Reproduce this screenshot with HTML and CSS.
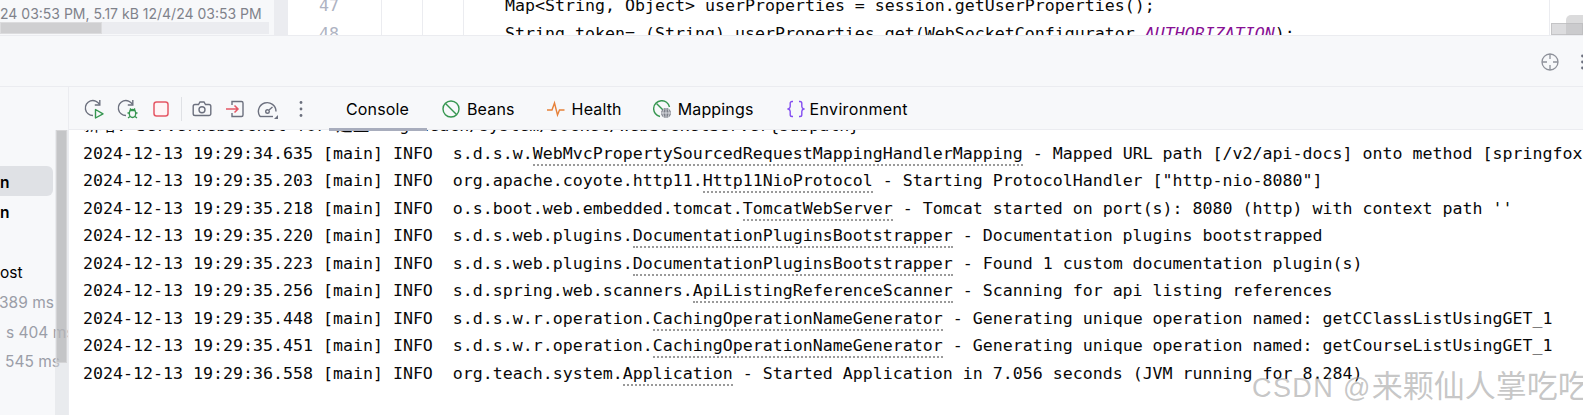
FILE: index.html
```html
<!DOCTYPE html>
<html lang="en">
<head>
<meta charset="utf-8">
<title>Run console</title>
<link rel="stylesheet" href="styles.css">
</head>
<body>
<div class="top">
  <div class="project">
    <div class="project-text">24 03:53 PM, 5.17 kB 12/4/24 03:53 PM</div>
    <div class="hbar"><div class="hthumb"></div></div>
  </div>
  <div class="project-track"></div>
  <div class="gutter">
    <div class="nums"><div class="num">47</div><div class="num">48</div></div>
    <div class="gcol"></div><div class="gcol"></div><div class="gcol"></div>
  </div>
  <div class="code">
    <div class="code-line">Map&lt;String, Object&gt; userProperties = session.getUserProperties();</div>
    <div class="code-line">String token= (String) userProperties.get(WebSocketConfigurator.<i class="const">AUTHORIZATION</i>);</div>
  </div>
  <div class="minimap"><div class="mini-box"></div><div class="mini-over"></div></div>
</div>

<div class="panel">
  <div class="panel-head">
    <svg class="cross" width="20" height="20" viewBox="0 0 20 20" fill="none" stroke="#8e919a" stroke-width="1.3"><circle cx="10" cy="10" r="8"/><path d="M10 2v5M10 13v5M2 10h5M13 10h5"/></svg>
    <svg class="more-cut" width="5" height="20" viewBox="0 0 5 20" fill="#6c707e"><circle cx="2.5" cy="4" r="1.4"/><circle cx="2.5" cy="10" r="1.4"/><circle cx="2.5" cy="16" r="1.4"/></svg>
  </div>
  <div class="panel-body">
    <div class="side">
      <div class="side-list">
        <div class="side-row sel"><span class="strong">n</span></div>
        <div class="side-row"><span class="strong">n</span></div>
        <div class="side-row"></div>
        <div class="side-row"><span>ost</span></div>
        <div class="side-row muted pull"><span>389 ms</span></div>
        <div class="side-row muted in6"><span>s 404 ms</span></div>
        <div class="side-row muted in5"><span>545 ms</span></div>
      </div>
      <div class="vtrack"><div class="vthumb"></div></div>
    </div>
    <div class="main">
      <div class="toolbar">
        <div class="tool"><svg width="22" height="22" viewBox="0 0 22 22" fill="none"><path d="M9 17.5a7.5 7.5 0 1 1 6.5-11" stroke="#6c707e" stroke-width="1.4"/><path d="M15.8 2v5h-5" stroke="#6c707e" stroke-width="1.4"/><path d="M11.5 11.5v8.5l7.5-4.2z" stroke="#369650" stroke-width="1.4" stroke-linejoin="round"/></svg></div>
        <div class="tool"><svg width="22" height="22" viewBox="0 0 22 22" fill="none"><path d="M9 17.5a7.5 7.5 0 1 1 6.5-11" stroke="#6c707e" stroke-width="1.4"/><path d="M15.8 2v5h-5" stroke="#6c707e" stroke-width="1.4"/><ellipse cx="15.5" cy="15.5" rx="3.2" ry="4" stroke="#369650" stroke-width="1.4"/><path d="M13 10.5l1.5 2M18 10.5l-1.5 2M10.5 15h2M18.5 15h2M11 20l2-1.5M20 20l-2-1.5M12.5 12.5h6" stroke="#369650" stroke-width="1.3"/></svg></div>
        <div class="tool"><svg width="22" height="22" viewBox="0 0 22 22"><rect x="4" y="4" width="14" height="14" rx="2.5" fill="#fff4f6" stroke="#e55765" stroke-width="1.5"/></svg></div>
        <div class="tool-sep"></div>
        <div class="tool"><svg width="22" height="22" viewBox="0 0 22 22" fill="none" stroke="#6c707e" stroke-width="1.4"><path d="M4 6.5h3.500l1.500-2.500h4l1.500 2.500H18a1.800 1.800 0 0 1 1.800 1.800v7.400a1.800 1.800 0 0 1-1.800 1.800H4a1.800 1.800 0 0 1-1.800-1.800V8.300A1.800 1.800 0 0 1 4 6.500z"/><circle cx="11" cy="11.700" r="3"/></svg></div>
        <div class="tool"><svg width="22" height="22" viewBox="0 0 22 22" fill="none"><path d="M8 7V3.500h9.500a1.500 1.500 0 0 1 1.500 1.500v12a1.500 1.500 0 0 1-1.500 1.500H8V15" stroke="#6c707e" stroke-width="1.400"/><path d="M2 11h12M10.500 7.500L14 11l-3.500 3.500" stroke="#e55765" stroke-width="1.500"/></svg></div>
        <div class="tool"><svg width="22" height="22" viewBox="0 0 22 22" fill="none"><path d="M3 18.500A8.800 8.800 0 1 1 19 13.500" stroke="#6c707e" stroke-width="1.400"/><path d="M3 18.500h13" stroke="#6c707e" stroke-width="1.400"/><circle cx="10.500" cy="13.500" r="1.800" stroke="#6c707e" stroke-width="1.400"/><path d="M12 12l3.500-3" stroke="#6c707e" stroke-width="1.400"/><path d="M21 17v4h-4z" fill="#6c707e"/></svg></div>
        <div class="tool"><svg width="22" height="22" viewBox="0 0 22 22" fill="#6c707e"><circle cx="11" cy="4.500" r="1.400"/><circle cx="11" cy="11" r="1.400"/><circle cx="11" cy="17.500" r="1.400"/></svg></div>
        <div class="tabs">
          <div class="tab active">Console</div>
          <div class="tab beans"><svg width="18" height="18" viewBox="0 0 18 18" fill="none" stroke="#369650" stroke-width="1.400"><circle cx="9" cy="9" r="8"/><path d="M3.500 3.500l11 11"/></svg>Beans</div>
          <div class="tab health"><svg width="18" height="18" viewBox="0 0 18 18" fill="none" stroke="#e6813a" stroke-width="1.400"><path d="M0 10h5l2.500-7 3 12 2-5h5"/></svg>Health</div>
          <div class="tab mappings"><svg width="18" height="18" viewBox="0 0 18 18" fill="none"><path d="M7 16.500A8 8 0 1 1 16.500 7" stroke="#369650" stroke-width="1.400"/><path d="M3.500 3.500l9 9" stroke="#369650" stroke-width="1.400"/><circle cx="13" cy="13" r="5" fill="#7d808a"/><path d="M8 13h10M13 8v10M11 9c-1.500 2.500-1.500 5.500 0 8M15 9c1.500 2.500 1.500 5.500 0 8" stroke="#f7f8fa" stroke-width=".7"/></svg>Mappings</div>
          <div class="tab env"><svg width="18" height="18" viewBox="0 0 18 18" fill="none" stroke="#834df0" stroke-width="1.400"><path d="M6 1.500H5a1.800 1.800 0 0 0-1.800 1.800v3.200c0 1.200-.7 2-1.800 2.500 1.100.5 1.800 1.300 1.800 2.500v3.200A1.800 1.800 0 0 0 5 16.500h1M12 1.500h1a1.800 1.800 0 0 1 1.800 1.800v3.200c0 1.200.7 2 1.800 2.500-1.100.5-1.800 1.300-1.800 2.500v3.200a1.800 1.800 0 0 1-1.800 1.800h-1"/></svg>Environment</div>
        </div>
      </div>
      <div class="log">
        <div class="line">新增: ServerWebSocket for 建立 org.teach/system/socket/WebSocketServer{subpath}</div>
        <div class="line">2024-12-13 19:29:34.635 [main] INFO  s.d.s.w.<span class="cls">WebMvcPropertySourcedRequestMappingHandlerMapping</span> - Mapped URL path [/v2/api-docs] onto method [springfox.documentation</div>
        <div class="line">2024-12-13 19:29:35.203 [main] INFO  org.apache.coyote.http11.<span class="cls">Http11NioProtocol</span> - Starting ProtocolHandler ["http-nio-8080"]</div>
        <div class="line">2024-12-13 19:29:35.218 [main] INFO  o.s.boot.web.embedded.tomcat.<span class="cls">TomcatWebServer</span> - Tomcat started on port(s): 8080 (http) with context path ''</div>
        <div class="line">2024-12-13 19:29:35.220 [main] INFO  s.d.s.web.plugins.<span class="cls">DocumentationPluginsBootstrapper</span> - Documentation plugins bootstrapped</div>
        <div class="line">2024-12-13 19:29:35.223 [main] INFO  s.d.s.web.plugins.<span class="cls">DocumentationPluginsBootstrapper</span> - Found 1 custom documentation plugin(s)</div>
        <div class="line">2024-12-13 19:29:35.256 [main] INFO  s.d.spring.web.scanners.<span class="cls">ApiListingReferenceScanner</span> - Scanning for api listing references</div>
        <div class="line">2024-12-13 19:29:35.448 [main] INFO  s.d.s.w.r.operation.<span class="cls">CachingOperationNameGenerator</span> - Generating unique operation named: getCClassListUsingGET_1</div>
        <div class="line">2024-12-13 19:29:35.451 [main] INFO  s.d.s.w.r.operation.<span class="cls">CachingOperationNameGenerator</span> - Generating unique operation named: getCourseListUsingGET_1</div>
        <div class="line">2024-12-13 19:29:36.558 [main] INFO  org.teach.system.<span class="cls">Application</span> - Started Application in 7.056 seconds (JVM running for 8.284)</div>
        <div class="watermark">CSDN @<span class="wm-cjk">来颗仙人掌吃吃</span></div>
      </div>
    </div>
  </div>
</div>
</body>
</html>
```
FILE: styles.css
```css
* { box-sizing: border-box; }
html, body { margin: 0; height: 100%; }
body {
  width: 1583px;
  height: 415px;
  overflow: hidden;
  display: flex;
  flex-direction: column;
  background: #fff;
  font-family: Inter, "Noto Sans", sans-serif;
  color: #000;
}

/* editor strip */
.top { height: 35px; display: flex; overflow: hidden; flex: none; }
.project { width: 274px; flex: none; background: #f7f8fa; position: relative; overflow: hidden; }
.project-text { font-size: 14px; color: #7f828b; white-space: nowrap; line-height: 28px; }
.hbar { position: absolute; left: 0; bottom: 1px; width: 269px; height: 12px; background: #ebecf0; }
.hthumb { width: 102px; height: 100%; background: #cfcfd1; border: 1px solid #dcdcde; }
.project-track { width: 14px; flex: none; background: #ebecf0; }
.gutter { width: 174px; flex: none; display: flex; }
.nums { width: 93px; flex: none; padding-left: 31px; margin-top: -8px; }
.num { font: 16.6px/27.5px "DejaVu Sans Mono", monospace; color: #aeb3c2; height: 27.5px; }
.gcol { width: 41px; flex: none; border-left: 1px solid #ebecf0; }
.gcol:last-child { width: 40px; }
.code { width: 1087px; flex: none; padding-left: 43px; margin-top: -8px; }
.code-line { font: 16.6px/27.5px "DejaVu Sans Mono", monospace; letter-spacing: .006px; color: #080808; white-space: pre; height: 27.5px; }
.const { color: #871094; }
.minimap { flex: 1; border-left: 1px solid #ebecf0; position: relative; }
.mini-box { position: absolute; left: 1px; right: 0; top: 23px; height: 12px; background: #dcdcde; border: 1px solid #c4c4c6; }
.mini-over { position: absolute; left: 16px; right: 0; top: 15px; bottom: 0; background: rgba(190,190,192,.55); border-radius: 5px 0 0 0; }

/* tool window */
.panel { flex: 1; min-height: 0; display: flex; flex-direction: column; background: #f7f8fa; border-top: 1px solid #ebecf0; }
.panel-head { height: 51px; flex: none; border-bottom: 1px solid #ebecf0; display: flex; align-items: center; justify-content: flex-end; }
.cross { margin-right: 20px; margin-top: 1px; }
.more-cut { margin-right: -2px; margin-top: 1px; flex: none; }
.panel-body { flex: 1; min-height: 0; display: flex; }

.side { width: 69px; flex: none; position: relative; overflow: hidden; border-right: 1px solid #ebecf0; }
.side-list { padding-top: 79px; font-size: 15.5px; line-height: 33px; white-space: nowrap; color: #000; }
.side-row { height: 30px; }
.side-row.sel { width: 53px; background: #dfe1e5; border-radius: 0 6px 6px 0; }
.strong { font-weight: 600; }
.muted { color: #9b9ea8; }
.pull span { margin-left: -1px; }
.in6 { padding-left: 6px; }
.in5 { padding-left: 5px; line-height: 32px; }
.vtrack { position: absolute; left: 55px; width: 13px; top: 43px; bottom: 0; background: rgba(220,221,226,.5); }
.vthumb { margin: 0 auto; width: 11px; height: 233px; background: rgba(165,165,167,.55); border: 1px solid #d4d4d6; }

.main { flex: 1; min-width: 0; display: flex; flex-direction: column; }
.toolbar { height: 43px; flex: none; display: flex; align-items: center; padding: 2px 0 0 9px; border-bottom: 1px solid #ebecf0; }
.tool { width: 33px; height: 33px; flex: none; display: flex; align-items: center; justify-content: center; }
.tool-sep { width: 1px; height: 24px; background: #dfe1e5; margin: 0 3px 0 4px; flex: none; }
.tabs { display: flex; align-items: stretch; height: 100%; margin-left: 12px; font-size: 16px; color: #000; }
.tab { display: flex; align-items: center; gap: 7px; position: relative; z-index: 1; white-space: nowrap; letter-spacing: .15px; }
.tab.active { width: 98px; padding-left: 17px; }
.tab.active::after { content: ""; position: absolute; left: 0; right: 0; bottom: -2px; height: 3px; background: #a8adbd; }
.tab.beans { margin-left: 15px; }
.tab.health { margin-left: 32px; }
.tab.mappings { margin-left: 31px; }
.tab.env { margin-left: 33px; gap: 5px; letter-spacing: .35px; }

.log { flex: 1; min-height: 0; background: #fff; display: flex; flex-direction: column; justify-content: flex-end; overflow: hidden; padding: 0 0 28px 14px; position: relative; }
.line { font-family: "DejaVu Sans Mono", "Noto Sans CJK SC", monospace; font-size: 16.6px; letter-spacing: .006px; line-height: 27.5px; height: 27.5px; white-space: pre; flex: none; color: #080808; }
.cls { border-bottom: 2px dotted #9a9a9a; padding-bottom: 1px; }
.watermark { position: absolute; left: 1183px; top: 241px; font-family: "Liberation Sans", "Noto Sans CJK SC", sans-serif; font-size: 27px; letter-spacing: 1.4px; line-height: 32px; color: rgba(150,150,150,.55); white-space: nowrap; }
.wm-cjk { font-size: 31px; letter-spacing: 0; }
```
